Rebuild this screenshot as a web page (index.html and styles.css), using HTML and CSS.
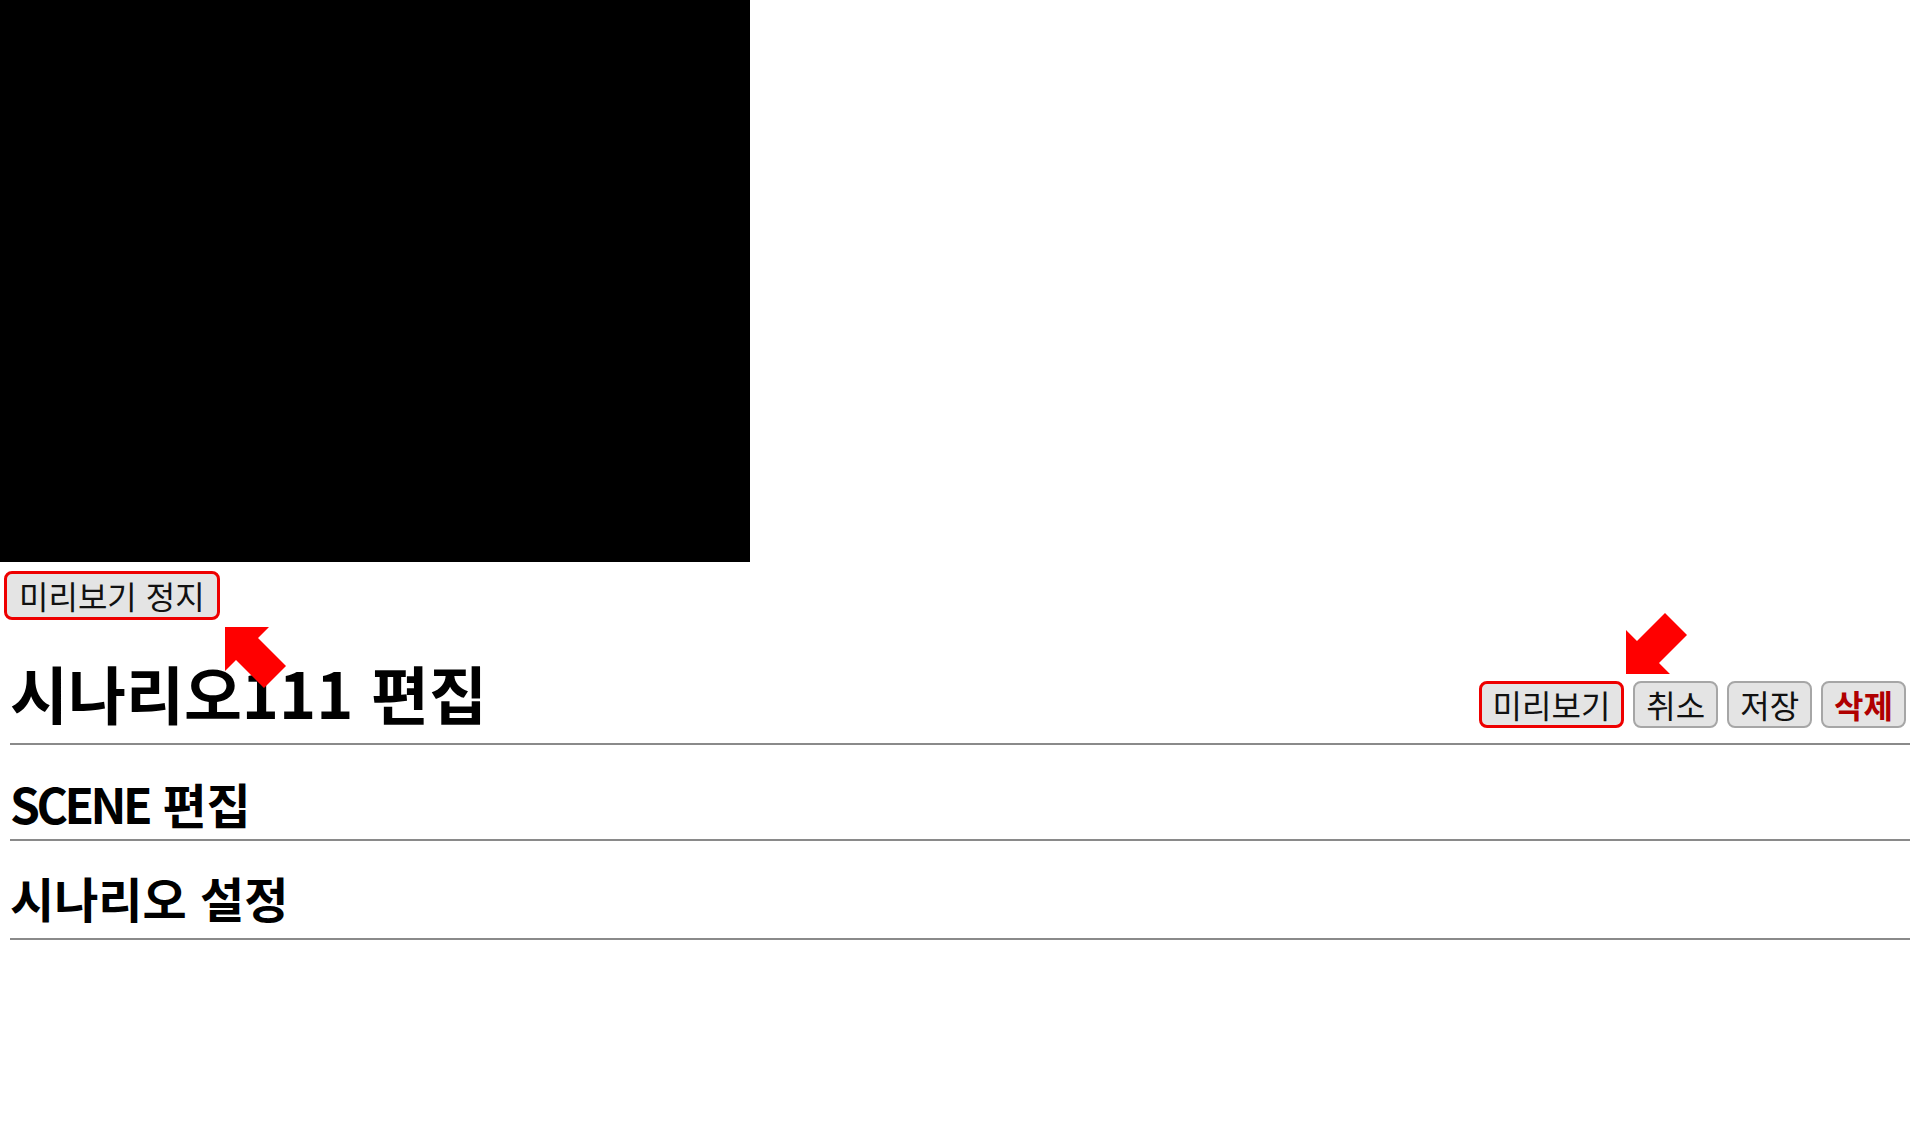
FILE: index.html
```html
<!DOCTYPE html>
<html lang="ko">
<head>
<meta charset="utf-8">
<title>시나리오 편집</title>
<link rel="stylesheet" href="styles.css">
</head>
<body>
<div class="page">
  <div class="preview"></div>
  <div class="stop-row">
    <button class="btn btn-mark btn-stop">미리보기 정지</button>
  </div>
  <main class="editor">
    <header class="editor-head">
      <h1 class="title">시나리오111 편집</h1>
      <div class="actions">
        <button class="btn btn-mark btn-preview">미리보기</button>
        <button class="btn">취소</button>
        <button class="btn">저장</button>
        <button class="btn btn-danger">삭제</button>
      </div>
    </header>
    <section class="section">
      <h2 class="section-title"><span class="latin">SCENE</span> 편집</h2>
    </section>
    <section class="section section-settings">
      <h2 class="section-title">시나리오 설정</h2>
    </section>
  </main>
  <svg class="arrow arrow-left" width="62" height="62" viewBox="0 0 62 62"><polygon points="0,0 44,0 33,11 61,39 39,61 11,33 0,44" fill="#ff0000"/></svg>
  <svg class="arrow arrow-right" width="62" height="62" viewBox="0 0 62 62"><polygon points="0,62 0,18 11,29 39,1 61,23 33,51 44,62" fill="#ff0000"/></svg>
</div>
</body>
</html>
```
FILE: styles.css
```css
html, body {
  margin: 0;
  padding: 0;
  background: #ffffff;
}
body {
  font-family: "Noto Sans CJK KR", "Noto Sans", sans-serif;
  color: #000;
}
.page {
  position: relative;
  min-height: 1125px;
}
.preview {
  width: 750px;
  height: 562px;
  background: #000;
}
.stop-row {
  padding: 9px 0 0 4px;
}
.btn {
  font-family: "Noto Sans CJK KR", sans-serif;
  font-size: 32px;
  line-height: 37px;
  padding: 3px 11px;
  border: 2px solid #a6a6a6;
  border-radius: 8px;
  background: #e4e4e4;
  color: #111;
  margin: 0;
  cursor: pointer;
}
.btn-mark {
  border: 3px solid #ee0000;
}
.btn-stop {
  padding: 3px 12px;
}
.btn-preview {
  padding: 2px 11px;
}
.btn-danger {
  color: #b00000;
  font-weight: 700;
}
.editor {
  padding: 0 10px;
}
.editor-head {
  display: flex;
  justify-content: space-between;
  align-items: flex-end;
  border-bottom: 2px solid #8a8a8a;
  padding: 0 4px 15px 0;
}
.title {
  margin: 36px 0 0 0;
  font-size: 63px;
  line-height: 72px;
  font-weight: 700;
}
.actions {
  display: flex;
  gap: 9px;
}
.section {
  border-bottom: 2px solid #8a8a8a;
}
.section-title {
  margin: 0;
  padding-top: 22px;
  font-size: 48px;
  line-height: 72px;
  font-weight: 700;
}
.section-settings .section-title {
  padding-top: 15px;
  line-height: 82px;
}
.latin {
  letter-spacing: -3.5px;
}
.arrow {
  position: absolute;
  display: block;
}
.arrow-left {
  left: 225px;
  top: 627px;
}
.arrow-right {
  left: 1626px;
  top: 612px;
}
```
